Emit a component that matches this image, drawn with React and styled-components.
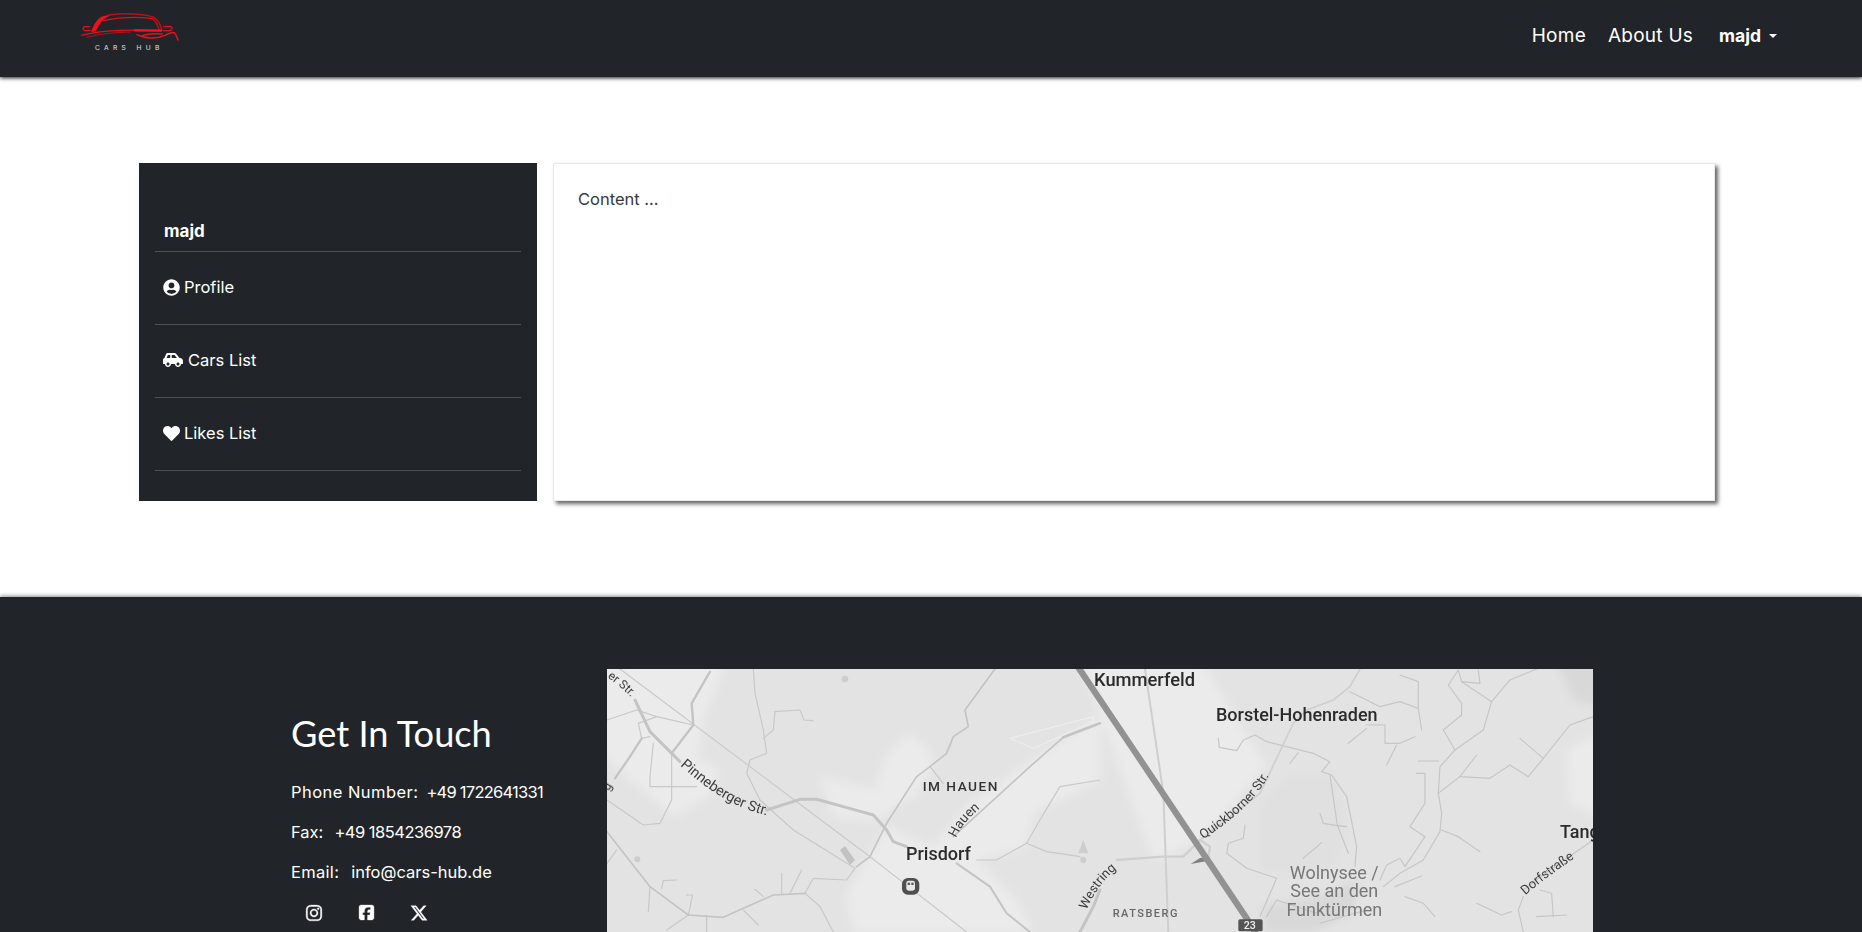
import React from 'react'
import styled, { createGlobalStyle } from 'styled-components'
import { FaUserCircle, FaCarSide, FaHeart, FaInstagram } from 'react-icons/fa'
import { FaSquareFacebook, FaXTwitter } from 'react-icons/fa6'

const dark = '#212529'

const GlobalStyle = createGlobalStyle`
  * { box-sizing: border-box; }
  body {
    margin: 0;
    background: #fff;
    color: ${dark};
    font-family: 'Inter', 'Open Sans', sans-serif;
    font-size: 16px;
  }
`

const Nav = styled.nav`
  position: relative;
  z-index: 2;
  height: 77px;
  padding: 0 85px 0 60px;
  display: flex;
  align-items: center;
  justify-content: space-between;
  background: ${dark};
  box-shadow: 0 1px 4px rgba(0, 0, 0, 0.9);
`

const NavLinks = styled.div`
  display: flex;
  align-items: center;
  padding-bottom: 6px;
`

const NavLink = styled.a`
  color: #fff;
  font-size: 19px;
  font-weight: 400;
  letter-spacing: 0.25px;
  margin-right: ${props => props.$gap}px;
`

const UserToggle = styled.a`
  display: flex;
  align-items: center;
  color: #fff;
  font-size: 17.5px;
  font-weight: 700;
  &::after {
    content: '';
    margin-left: 8px;
    border-top: 4px solid #fff;
    border-left: 4px solid transparent;
    border-right: 4px solid transparent;
  }
`

const Main = styled.main`
  display: flex;
  gap: 16px;
  padding: 86px 147px 96px 139px;
`

const Sidebar = styled.aside`
  width: 398px;
  height: 338px;
  flex: none;
  padding: 49px 16px 0;
  background: ${dark};
  color: #fff;
`

const SideName = styled.div`
  height: 40px;
  padding: 0 9px;
  border-bottom: 1px solid #4d5154;
  font-size: 17px;
  font-weight: 700;
  line-height: 38px;
`

const SideRow = styled.a`
  display: flex;
  align-items: center;
  gap: ${props => props.$gap}px;
  height: 73px;
  padding: 0 8px 2px;
  border-bottom: 1px solid #4d5154;
  color: #fff;
  font-size: 16.5px;
  svg { flex: none; }
`

const Card = styled.section`
  flex: 1;
  height: 338px;
  padding: 23px 24px;
  background: #fff;
  border: 1px solid #e8ebee;
  box-shadow: 3px 3px 4px rgba(0, 0, 0, 0.6);
  color: #343a40;
  font-size: 16.5px;
  line-height: 24px;
`

const Footer = styled.footer`
  display: flex;
  height: 522px;
  padding: 72px 0 0 291px;
  background: ${dark};
  color: #fff;
  box-shadow: 0 -1px 4px rgba(0, 0, 0, 0.45);
`

const Contact = styled.div`
  width: 316px;
  flex: none;
  padding-top: 40px;
`

const Title = styled.h2`
  margin: 0 0 23px;
  font-family: 'Lato', 'Open Sans', sans-serif;
  font-size: 36.2px;
  font-weight: 400;
  line-height: 48px;
`

const ContactLine = styled.p`
  display: flex;
  gap: ${props => props.$gap}px;
  margin: 0 0 16px;
  font-size: 16.5px;
  line-height: 24px;
  white-space: nowrap;
`

const ContactLabel = styled.span`
  letter-spacing: ${props => props.$track || 0}px;
`

const ContactValue = styled.span`
  letter-spacing: ${props => props.$track || 0}px;
`

const Socials = styled.div`
  display: flex;
  gap: 35px;
  padding: 4px 0 0 14px;
  svg { stroke: currentColor; stroke-width: 10px; }
`

const MapBox = styled.div`
  width: 986px;
  height: 450px;
  flex: none;
  overflow: hidden;
  background: #e4e4e4;
  svg { display: block; }
`

const MapLabel = styled.text`
  font-family: 'Roboto', 'Liberation Sans', sans-serif;
  font-size: ${props => props.$size || 40}px;
  font-weight: ${props => props.$weight || 400};
  letter-spacing: ${props => props.$track || 0}px;
  fill: ${props => props.$color || '#3c3c3c'};
`

function Logo() {
  return (
    <svg width='160' height='77' viewBox='0 0 480 231'>
      <g transform='translate(45 24)'>
        <path d='M48 72 C56 52 64 36 78 27 C84 24 98 21 108 20 C92 28 80 38 72 52 L62 70 Z' fill='#f0101c' />
        <g fill='none' strokeLinecap='round'>
          <path d='M100 21 C150 15 205 17 234 27 C248 34 256 50 260 64' stroke='#c00c16' strokeWidth='4.5' />
          <path d='M84 38 C130 28 190 26 232 32 C242 38 248 52 252 64' stroke='#e00d18' strokeWidth='3.5' />
          <path d='M20 82 C70 68 150 64 258 68' stroke='#e60e1a' strokeWidth='4' />
          <path d='M180 67 L258 68' stroke='#ff1020' strokeWidth='7' />
          <path d='M36 88 C80 76 120 74 165 72' stroke='#c40c16' strokeWidth='3' />
          <path d='M186 80 C205 90 240 96 270 82 C282 76 292 72 298 74 C304 80 307 88 309 96' stroke='#f0101c' strokeWidth='4.5' />
          <path d='M200 84 C215 78 235 76 262 78' stroke='#e60e1a' strokeWidth='5' />
          <path d='M46 67 L30 68 C22 66 22 57 30 56 L44 56' stroke='#e60e1a' strokeWidth='3.5' />
          <path d='M264 68 L284 68 C294 65 294 56 284 55 L266 56' stroke='#e60e1a' strokeWidth='3.5' />
        </g>
      </g>
      <text x='105' y='149' fill='#e2e2e2' fontFamily='Inter, sans-serif' fontSize='20' letterSpacing='13'>CARS HUB</text>
    </svg>
  )
}

const leftRoads = [
  ['105,120 150,215 240,305', 9],
  ['500,450 600,418 650,418 820,465 860,510 880,545 920,560', 9],
  ['330,35 275,130 280,195 215,280', 7],
  ['125,235 90,290 45,355', 7],
  ['1060,530 1290,320 1390,232', 5],
  ['1390,232 1500,190', 8],
  ['1070,610 1170,680 1220,760 1290,816', 6],
  ['1440,816 1480,740 1500,690', 9],
  ['21,515 150,680 265,765 370,772 430,745 520,705 615,700', 5],
  ['1185,27 1095,150 1105,200 1060,230 1040,280 990,320 950,350 860,490 810,590 770,620', 5],
]

const leftThin = [
  '60,27 450,320 810,590 1100,816',
  '460,27 465,100 490,210 500,280 450,300 440,340 480,420 580,510 765,625 740,660 640,655 615,700 660,740 700,816',
  '525,155 600,150 612,180 640,182',
  '525,155 520,210 490,235',
  '150,680 145,755',
  '185,685 190,662 230,660',
  '265,765 278,705 260,705',
  '545,640 545,700',
  '605,630 570,700',
  '465,688 490,710',
  '430,750 475,795',
  '320,770 320,816',
  '265,765 200,810',
  '1280,550 1340,575 1440,590',
  '1130,600 1190,600 1280,550 1320,480 1380,380 1500,360',
  '160,250 150,350 150,380 290,380',
  '170,170 115,190 125,235 150,230',
  '215,280 215,420 180,490 130,495 21,420',
  '21,180 110,150 170,170 280,195',
  '990,320 1030,370',
  '21,610 50,570',
]

const rightRoads = [
  ['300,540 480,400 580,190 620,150 700,120 750,80 780,27', 5],
  ['50,600 190,590 250,590 300,540 330,560 325,590', 7],
  ['135,27 190,400 205,816', 6],
]

const rightThin = [
  '355,235 358,262 410,272 430,240 465,225 500,245 640,280 690,305 665,335 695,345 740,410 770,560 765,620',
  '570,310 595,278',
  '690,345 712,495 745,580',
  '660,460 670,490 712,497 740,500',
  '435,495 430,535 385,550 380,580 440,625 530,655 480,770',
  '665,548 610,595',
  '750,95 840,140 900,125 955,145 965,210',
  '900,45 955,65 955,145',
  '800,195 855,195 855,250 900,250 945,230',
  '800,205 745,250',
  '890,255 860,315',
  '1045,75 1085,130 1085,165 1030,210 1065,270 1020,320 1015,400 1025,460 1020,515 970,600 900,640 850,680',
  '1045,75 1075,30',
  '1175,125 1085,65 1075,30',
  '1085,65 1140,70 1135,30',
  '1175,125 1230,60 1310,27',
  '1175,125 1150,210 1065,270',
  '955,303 1015,303',
  '950,340 975,340 975,430 930,500 975,530 915,620 900,595 860,615 840,660',
  '1130,285 1080,350 1170,355 1230,315 1285,350 1330,295 1410,195 1480,170',
  '1260,235 1330,295',
  '1080,350 1015,400',
  '1025,510 1075,530 1140,575',
  '885,680 965,648',
  '915,710 970,730 1005,770',
  '1130,730 1205,765 1235,755',
  '1270,710 1255,750 1270,816',
  '1270,690 1335,640 1480,540',
  '1320,690 1355,700 1360,770',
  '1310,770 1400,765',
  '500,770 530,720 650,760',
  '660,790 800,750',
]

function Line({ points, width, color }) {
  return <polyline points={points} fill='none' stroke={color} strokeWidth={width} strokeLinejoin='round' strokeLinecap='round' />
}

function GoogleMap() {
  return (
    <svg width='986' height='450' viewBox='607 669 986 450'>
      <defs>
        <filter id='soft' x='-2%' y='-2%' width='104%' height='104%'>
          <feGaussianBlur stdDeviation='0.5' />
        </filter>
        <filter id='patchy' x='-5%' y='-5%' width='110%' height='110%'>
          <feGaussianBlur stdDeviation='5' />
        </filter>
        <path id='pinneberger' d='M240 316 C330 395 400 445 525 472' />
        <path id='oldStr' d='M22 52 C50 72 80 95 108 128' />
        <path id='hauen' d='M1068 534 C1085 495 1115 465 1155 432' />
        <path id='quickborner' d='M310 538 C396 478 480 420 530 300' />
        <path id='westring' d='M-40 750 C-18 700 11 650 78 606' />
        <path id='dorf' d='M1276 706 C1330 658 1390 618 1455 573' />
      </defs>
      <rect x='607' y='669' width='986' height='450' fill='#e3e3e3' />
      <g filter='url(#patchy)'>
        <g transform='translate(600 660) scale(0.3333)' fill='#ebebeb'>
          <path d='M0 0 L380 0 L310 180 L290 300 L350 320 L340 400 L220 470 L130 390 L0 280 Z' />
          <path d='M660 350 L830 390 L850 300 L930 220 L980 260 L1000 320 L950 400 L830 480 L700 470 Z' />
          <path d='M740 700 L860 500 L1000 560 L1110 430 L1280 310 L1500 170 L1500 360 L1300 460 L1280 560 L1130 600 L1250 720 L1300 816 L760 816 Z' />
        </g>
        <g transform='translate(1100 660) scale(0.3333)'>
          <path d='M-60 0 L300 0 L500 320 L300 540 L160 600 Z' fill='#ebebeb' />
          <path d='M480 440 L560 350 L700 340 L740 480 L700 640 L480 640 Z' fill='#e0e0e0' />
          <path d='M490 740 L650 710 L780 660 L760 760 L640 816 L490 816 Z' fill='#d8d8d8' />
          <path d='M1400 270 L1500 220 L1500 470 L1410 430 Z' fill='#ebebeb' />
          <path d='M1370 0 L1500 0 L1500 140 L1420 120 Z' fill='#d8d8d8' />
        </g>
      </g>
      <g filter='url(#soft)'>
        <g transform='translate(600 660) scale(0.3333)'>
          <path d='M720 570 L735 558 L765 600 L750 615 Z' fill='#c2c2c2' />
          <circle cx='735' cy='57' r='10' fill='#cdcdcd' />
          <circle cx='112' cy='598' r='9' fill='#cdcdcd' />
          <circle cx='1450' cy='600' r='9' fill='#cdcdcd' />
          <path d='M1435 580 L1450 540 L1465 580 Z' fill='#cdcdcd' />
          <path d='M1230 235 L1480 170 L1480 185 L1300 265 Z' fill='none' stroke='#efefef' strokeWidth='3' />
          {leftThin.map(p => <Line key={p} points={p} width={3.5} color='#c8c8c8' />)}
          {leftRoads.map(([p, w]) => <Line key={p} points={p} width={w} color='#c4c4c4' />)}
          <rect x='906' y='654' width='52' height='50' rx='18' fill='#4f4f4f' />
          <rect x='919' y='662' width='26' height='30' rx='7' fill='#e8e8e8' />
          <rect x='923' y='668' width='7' height='7' fill='#555' />
          <rect x='934' y='668' width='7' height='7' fill='#555' />
          <MapLabel $size={43}><textPath href='#pinneberger'>Pinneberger Str.</textPath></MapLabel>
          <MapLabel $size={36}><textPath href='#oldStr'>er Str.</textPath></MapLabel>
          <MapLabel $size={38} transform='rotate(-60 26 390)' x='22' y='392'>g</MapLabel>
          <MapLabel x='968' y='393' $size={41} $weight={500} $track={4.5} $color='#333'>IM HAUEN</MapLabel>
          <MapLabel><textPath href='#hauen'>Hauen</textPath></MapLabel>
          <MapLabel x='918' y='600' $size={54} $weight={500} $color='#2c2c2c'>Prisdorf</MapLabel>
        </g>
        <g transform='translate(1100 660) scale(0.3333)'>
          {rightThin.map(p => <Line key={p} points={p} width={3.5} color='#c6c6c6' />)}
          {rightRoads.map(([p, w]) => <Line key={p} points={p} width={w} color='#cfcfcf' />)}
          <path d='M272 612 L300 594 L330 590 L318 604 Z' fill='#808080' />
          <Line points='-80,0 440,775 480,840' width={19} color='#929292' />
          <MapLabel x='-18' y='78' $size={55} $weight={500} $color='#2c2c2c'>Kummerfeld</MapLabel>
          <MapLabel x='348' y='182' $size={54} $weight={500} $color='#2c2c2c'>Borstel-Hohenraden</MapLabel>
          <MapLabel $size={39}><textPath href='#quickborner'>Quickborner Str.</textPath></MapLabel>
          <MapLabel $size={39}><textPath href='#westring'>Westring</textPath></MapLabel>
          <MapLabel $size={39}><textPath href='#dorf'>Dorfstraße</textPath></MapLabel>
          <MapLabel x='38' y='772' $size={33} $weight={500} $track={4.5} $color='#666'>RATSBERG</MapLabel>
          <g textAnchor='middle'>
            <MapLabel x='703' y='658' $size={54} $color='#777'>Wolnysee /</MapLabel>
            <MapLabel x='703' y='712' $size={54} $color='#777'>See an den</MapLabel>
            <MapLabel x='703' y='767' $size={54} $color='#777'>Funktürmen</MapLabel>
          </g>
          <rect x='415' y='778' width='73' height='36' rx='5' fill='#555' />
          <MapLabel x='431' y='807' $size={32} $weight={500} $color='#eee'>23</MapLabel>
          <MapLabel x='1380' y='533' $size={54} $weight={500} $color='#2c2c2c'>Tang</MapLabel>
        </g>
      </g>
    </svg>
  )
}

export default function App() {
  return (
    <>
      <GlobalStyle />
      <Nav>
        <Logo />
        <NavLinks>
          <NavLink $gap={22}>Home</NavLink>
          <NavLink $gap={26}>About Us</NavLink>
          <UserToggle>majd</UserToggle>
        </NavLinks>
      </Nav>
      <Main>
        <Sidebar>
          <SideName>majd</SideName>
          <SideRow $gap={4}><FaUserCircle size={17} /> Profile</SideRow>
          <SideRow $gap={5}><FaCarSide size={20} /> Cars List</SideRow>
          <SideRow $gap={4}><FaHeart size={17} /> Likes List</SideRow>
        </Sidebar>
        <Card>Content ...</Card>
      </Main>
      <Footer>
        <Contact>
          <Title>Get In Touch</Title>
          <ContactLine $gap={8}>
            <ContactLabel $track={0.45}>Phone Number:</ContactLabel>
            <ContactValue $track={-0.75}>+49 1722641331</ContactValue>
          </ContactLine>
          <ContactLine $gap={11}>
            <ContactLabel>Fax:</ContactLabel>
            <ContactValue $track={-0.5}>+49 1854236978</ContactValue>
          </ContactLine>
          <ContactLine $gap={12}>
            <ContactLabel $track={0.3}>Email:</ContactLabel>
            <ContactValue>info@cars-hub.de</ContactValue>
          </ContactLine>
          <Socials>
            <FaInstagram size={18} />
            <FaSquareFacebook size={17} />
            <FaXTwitter size={18} />
          </Socials>
        </Contact>
        <MapBox>
          <GoogleMap />
        </MapBox>
      </Footer>
    </>
  )
}
